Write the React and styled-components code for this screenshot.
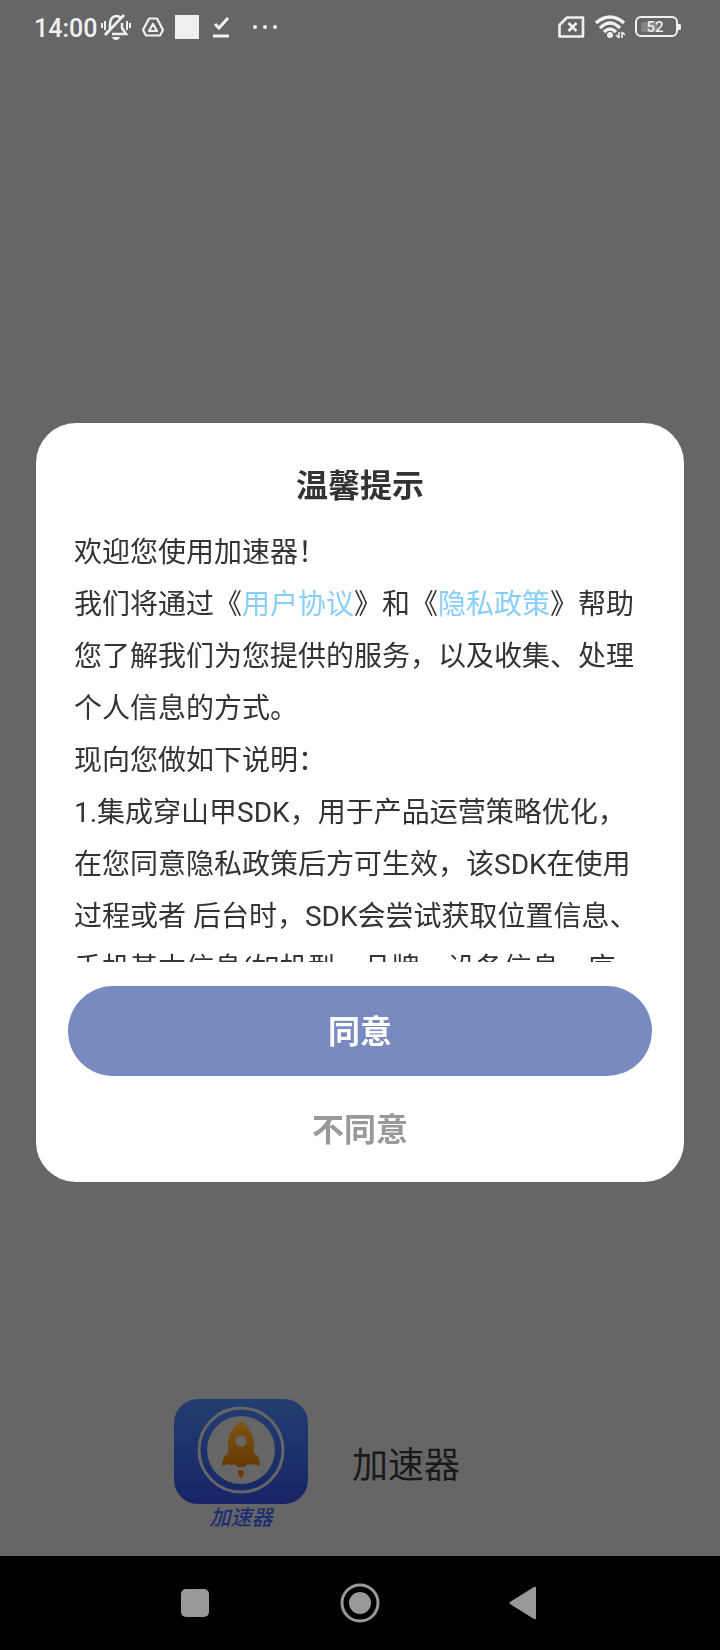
import React, { useState } from "react";
import styled, { createGlobalStyle } from "styled-components";

const GlobalStyle = createGlobalStyle`
  * {
    box-sizing: border-box;
  }

  body {
    margin: 0;
    background: #666666;
    font-family: Roboto, "Noto Sans CJK SC", sans-serif;
  }
`;

const Screen = styled.div`
  display: flex;
  flex-direction: column;
  min-height: 100vh;
`;

const StatusBar = styled.header`
  display: flex;
  align-items: center;
  justify-content: space-between;
  height: 54px;
  padding: 0 38px 0 34px;
  color: #f0f0f0;
`;

const StatusGroup = styled.div`
  display: flex;
  align-items: center;
  gap: ${(props) => props.$gap}px;
`;

const Clock = styled.time`
  padding-top: 4px;
  font-size: 25px;
  font-weight: 500;
  line-height: 32px;
`;

const Icon = styled.svg`
  display: block;
  flex: none;
`;

const Splash = styled.main`
  display: flex;
  flex: 1;
  align-items: flex-end;
  justify-content: center;
  gap: 44px;
  padding: 0 86px 24px 0;
`;

const Brand = styled.div`
  display: flex;
  flex-direction: column;
  align-items: center;
  width: 134px;
`;

const BrandLabel = styled.span`
  color: #1b2e73;
  font-size: 21px;
  font-style: italic;
  font-weight: 500;
  line-height: 28px;
`;

const AppName = styled.h1`
  margin: 0;
  padding-bottom: 42px;
  color: #1a1a1a;
  font-size: 36px;
  font-weight: 400;
  line-height: 48px;
`;

const Overlay = styled.div`
  position: fixed;
  inset: 54px 0 99px;
  display: flex;
  align-items: center;
  justify-content: center;
  padding: 0 36px;
`;

const Dialog = styled.section`
  width: 100%;
  padding: 39px 32px 8px;
  border-radius: 40px;
  background: #ffffff;
  color: #333333;
`;

const Title = styled.h2`
  margin: 0 0 17px;
  font-size: 32px;
  font-weight: 700;
  line-height: 48px;
  text-align: center;
`;

const Terms = styled.div`
  height: 435px;
  padding: 0 12px 0 6px;
  overflow-y: auto;
  scrollbar-width: none;
  font-size: 28px;
  line-height: 52px;

  p {
    margin: 0;
  }

  a {
    color: #87cefa;
    text-decoration: none;
  }
`;

const Button = styled.button`
  display: block;
  width: 100%;
  height: 90px;
  padding: 0 0 4px;
  border: 0;
  border-radius: 45px;
  background: ${(props) => (props.$primary ? "#778bc0" : "transparent")};
  color: ${(props) => (props.$primary ? "#ffffff" : "#999999")};
  font-family: inherit;
  font-size: 32px;
  font-weight: 700;
`;

const Actions = styled.div`
  display: flex;
  flex-direction: column;
  gap: 8px;
  padding-top: 24px;
`;

const NavBar = styled.nav`
  display: grid;
  grid-template-columns: repeat(3, 165px);
  justify-content: center;
  height: 94px;
  background: #000000;
`;

const NavButton = styled.button`
  display: flex;
  align-items: center;
  justify-content: center;
  padding: 0;
  border: 0;
  background: transparent;
  color: #999999;
`;

function MutedBell() {
  return (
    <Icon width="30" height="28" viewBox="0 0 30 28" fill="none" stroke="currentColor" strokeWidth="2.6">
      <path d="M9 16V11C9 6 12 3 15 3C17 3 19 4 20 5M21 10V15L25 21H11" />
      <path d="M4 22L23 2" />
      <path d="M7 18L5 21" />
      <path d="M11 24H19Q18 27 15 27T11 24Z" fill="currentColor" stroke="none" />
      <path d="M1 10V15M4 8V17M26 8V17M29 10V15" strokeWidth="2" />
    </Icon>
  );
}

function Triangles() {
  return (
    <Icon width="22" height="20" viewBox="0 0 22 20" fill="none" stroke="currentColor" strokeWidth="2.2" strokeLinejoin="round">
      <path d="M7 1.500H15L21 13L18 18.500H4L1 13Z" />
      <path d="M11 7L15 14H7Z" />
    </Icon>
  );
}

function Logo() {
  return (
    <Icon width="134" height="105" viewBox="0 0 134 105">
      <defs>
        <linearGradient id="tile" x1="0" y1="0" x2="0" y2="1">
          <stop stopColor="#233e70" />
          <stop offset="1" stopColor="#172567" />
        </linearGradient>
        <linearGradient id="rocket" x1="0" y1="0" x2="0" y2="1">
          <stop stopColor="#7d5614" />
          <stop offset="1" stopColor="#673800" />
        </linearGradient>
      </defs>
      <rect width="134" height="105" rx="24" fill="url(#tile)" />
      <circle cx="67" cy="51" r="42" fill="none" stroke="#666666" strokeWidth="3" />
      <circle cx="67" cy="51" r="34" fill="#666666" />
      <path
        fill="url(#rocket)"
        fillRule="evenodd"
        d="M67 22C76 28 80 37 80 45V54C84 57 86 61 86 67C82 65 79 65 76 66L74 65Q67 72 60 65L58 66C55 65 52 65 48 67C48 61 50 57 54 54V45C54 37 58 28 67 22ZM67 36.500A5.500 5.500 0 1 0 67 47.500A5.500 5.500 0 1 0 67 36.500Z"
      />
      <path d="M64 72Q67 70 70 72V75L67 80L64 75Z" fill="#713900" />
    </Icon>
  );
}

function App() {
  const [open, setOpen] = useState(true);

  return (
    <>
      <GlobalStyle />
      <Screen>
        <StatusBar>
          <StatusGroup $gap={11}>
            <StatusGroup $gap={4}>
              <Clock>14:00</Clock>
              <MutedBell />
            </StatusGroup>
            <Triangles />
            <Icon width="24" height="24" viewBox="0 0 24 24">
              <rect width="24" height="24" fill="currentColor" />
            </Icon>
            <StatusGroup $gap={22}>
              <Icon width="20" height="22" viewBox="0 0 20 22" fill="none" stroke="currentColor" strokeWidth="3">
                <path d="M5 8L9 12L18 2M3 20H19" />
              </Icon>
              <Icon width="26" height="6" viewBox="0 0 26 6" fill="currentColor">
                <circle cx="3" cy="3" r="2" />
                <circle cx="13" cy="3" r="2" />
                <circle cx="23" cy="3" r="2" />
              </Icon>
            </StatusGroup>
          </StatusGroup>
          <StatusGroup $gap={10}>
            <Icon width="27" height="22" viewBox="0 0 27 22" fill="none" stroke="currentColor" strokeWidth="2.6" strokeLinejoin="round">
              <path d="M9 1.500H25V20.500H1.500V9Z" />
              <path d="M10.500 7L18.500 15M18.500 7L10.500 15" />
            </Icon>
            <Icon width="30" height="24" viewBox="0 0 30 24" fill="none" stroke="currentColor" strokeWidth="3.4">
              <path d="M1 8Q15-4 29 8M5 13Q15 3 25 13M9 17Q15 11 21 17" />
              <circle cx="15" cy="20" r="3" fill="currentColor" stroke="none" />
              <path d="M24 17V23M21 20L24 23M27 23V17M30 20L27 17" strokeWidth="1.600" />
            </Icon>
            <Icon width="47" height="22" viewBox="0 0 47 22">
              <rect x="6" y="6" width="17" height="10" rx="2" fill="#858585" />
              <rect x="1" y="1" width="41" height="19" rx="5" fill="none" stroke="currentColor" strokeWidth="2" />
              <path d="M43 8H45Q46 8 46 10V12Q46 14 45 14H43Z" fill="currentColor" />
              <text x="20" y="16" textAnchor="middle" fontSize="15" fontWeight="500" fill="currentColor">
                52
              </text>
            </Icon>
          </StatusGroup>
        </StatusBar>

        <Splash>
          <Brand>
            <Logo />
            <BrandLabel>加速器</BrandLabel>
          </Brand>
          <AppName>加速器</AppName>
        </Splash>

        <NavBar>
          <NavButton aria-label="最近任务">
            <Icon width="28" height="28" viewBox="0 0 28 28">
              <rect width="28" height="28" rx="5" fill="currentColor" />
            </Icon>
          </NavButton>
          <NavButton aria-label="主页">
            <Icon width="40" height="40" viewBox="0 0 40 40">
              <circle cx="20" cy="20" r="18" fill="none" stroke="currentColor" strokeWidth="3" />
              <circle cx="20" cy="20" r="11" fill="currentColor" />
            </Icon>
          </NavButton>
          <NavButton aria-label="返回">
            <Icon width="32" height="34" viewBox="0 0 32 34">
              <path d="M25 1Q27 0 27 2V32Q27 34 25 33L1 18Q0 17 1 16Z" fill="currentColor" />
            </Icon>
          </NavButton>
        </NavBar>
      </Screen>

      {open && (
        <Overlay>
          <Dialog role="dialog" aria-labelledby="dialog-title">
            <Title id="dialog-title">温馨提示</Title>
            <Terms>
              <p>欢迎您使用加速器！</p>
              <p>
                我们将通过《<a href="#agreement">用户协议</a>》和《<a href="#privacy">隐私政策</a>》帮助您了解我们为您提供的服务，以及收集、处理个人信息的方式。
              </p>
              <p>现向您做如下说明：</p>
              <p>
                1.集成穿山甲SDK，用于产品运营策略优化，在您同意隐私政策后方可生效，该SDK在使用过程或者 后台时，SDK会尝试获取位置信息、手机基本信息(如机型、品牌、设备信息、序列号)
              </p>
            </Terms>
            <Actions>
              <Button $primary onClick={() => setOpen(false)}>
                同意
              </Button>
              <Button onClick={() => setOpen(false)}>不同意</Button>
            </Actions>
          </Dialog>
        </Overlay>
      )}
    </>
  );
}

export default App;
